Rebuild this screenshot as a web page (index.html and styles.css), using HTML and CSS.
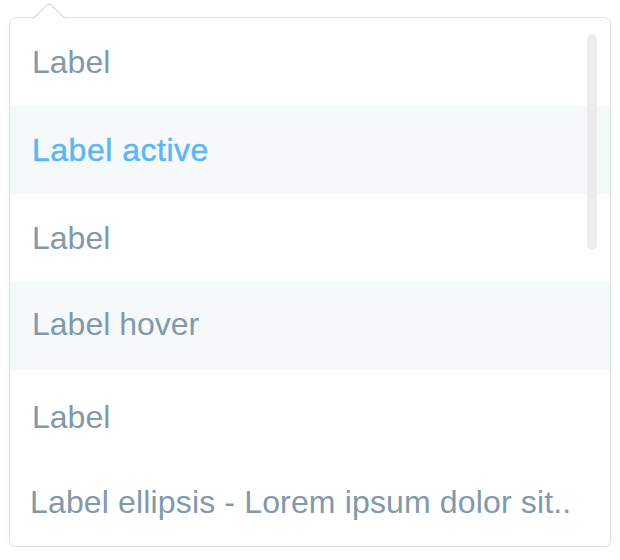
FILE: index.html
```html
<!DOCTYPE html>
<html>
<head>
<meta charset="utf-8">
<link rel="stylesheet" href="styles.css">
</head>
<body>
<div class="page">
  <div class="dropdown">
    <svg class="caret" width="34" height="16" viewBox="0 0 34 16">
      <path d="M1 15.5 L15 2 Q17 0.5 19 2 L33 15.5" fill="#ffffff" stroke="#dde2e6" stroke-width="1.5"/>
      <rect x="2" y="15.2" width="30" height="2" fill="#ffffff"/>
    </svg>
    <ul class="menu">
      <li class="item">Label</li>
      <li class="item active">Label active</li>
      <li class="item">Label</li>
      <li class="item hover">Label hover</li>
      <li class="item lower">Label</li>
      <li class="item ellipsis">Label ellipsis - Lorem ipsum dolor sit..</li>
    </ul>
    <div class="scrollbar"></div>
  </div>
</div>
</body>
</html>
```
FILE: styles.css
```css
html, body {
  margin: 0;
  padding: 0;
  background: #ffffff;
}
.page {
  padding: 17px 0 0 9px;
}
.dropdown {
  position: relative;
  width: 602px;
  height: 530px;
  box-sizing: border-box;
  border: 1.5px solid #dde2e6;
  border-radius: 7px;
  background: #ffffff;
  box-shadow: 0 2px 4px rgba(120, 140, 155, 0.12);
}
.caret {
  position: absolute;
  left: 22px;
  top: -15px;
  display: block;
}
.menu {
  list-style: none;
  margin: 0;
  padding: 0;
  border-radius: 6px;
  overflow: hidden;
}
.item {
  height: 88px;
  line-height: 88px;
  padding: 0 20px 0 22px;
  font-family: "Liberation Sans", Arial, sans-serif;
  font-size: 32px;
  color: #8199aa;
  white-space: nowrap;
  overflow: hidden;
}
.active {
  background: #f6f9fa;
  color: #5cb6f2;
  letter-spacing: 0.5px;
  -webkit-text-stroke: 0.45px #5cb6f2;
}
.hover {
  background: #f6f9fa;
  line-height: 84px;
}
.lower {
  line-height: 94px;
}
.ellipsis {
  padding-left: 20px;
  letter-spacing: 0.15px;
}
.scrollbar {
  position: absolute;
  right: 13px;
  top: 16px;
  width: 10px;
  height: 216px;
  border-radius: 5px;
  background: #ececec;
}
```
